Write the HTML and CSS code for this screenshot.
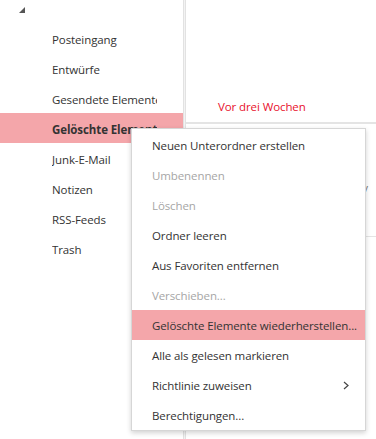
FILE: index.html
```html
<!DOCTYPE html>
<html lang="de">
<head>
<meta charset="utf-8">
<title>Ordner</title>
<link rel="stylesheet" href="styles.css">
</head>
<body>
<div class="app">
  <nav class="folders">
    <div class="tree-head">
      <svg class="caret" width="6" height="6" viewBox="0 0 6 6"><polygon points="6,0 6,6 0,6" fill="#555"/></svg>
    </div>
    <ul class="folder-list">
      <li class="folder"><span class="folder-name">Posteingang</span></li>
      <li class="folder"><span class="folder-name">Entwürfe</span></li>
      <li class="folder"><span class="folder-name">Gesendete Elemente</span></li>
      <li class="folder selected"><span class="folder-name">Gelöschte Elemente</span></li>
      <li class="folder"><span class="folder-name">Junk-E-Mail</span></li>
      <li class="folder"><span class="folder-name">Notizen</span></li>
      <li class="folder"><span class="folder-name">RSS-Feeds</span></li>
      <li class="folder"><span class="folder-name">Trash</span></li>
    </ul>
  </nav>
  <div class="divider"></div>
  <main class="messages">
    <div class="group-head">Vor drei Wochen</div>
    <div class="message-row"><span class="row-tail">v</span></div>
  </main>

  <ul class="context-menu">
    <li class="menu-item">Neuen Unterordner erstellen</li>
    <li class="menu-item disabled">Umbenennen</li>
    <li class="menu-item disabled">Löschen</li>
    <li class="menu-item">Ordner leeren</li>
    <li class="menu-item">Aus Favoriten entfernen</li>
    <li class="menu-item disabled">Verschieben...</li>
    <li class="menu-item active">Gelöschte Elemente wiederherstellen...</li>
    <li class="menu-item">Alle als gelesen markieren</li>
    <li class="menu-item has-sub">Richtlinie zuweisen
      <svg class="chev" width="6" height="9" viewBox="0 0 6 9"><polyline points="1,1 5,4.5 1,8" fill="none" stroke="#444" stroke-width="1.2"/></svg>
    </li>
    <li class="menu-item">Berechtigungen...</li>
  </ul>
</div>
</body>
</html>
```

FILE: styles.css
```css
* { box-sizing: border-box; }
html, body {
  margin: 0;
  padding: 0;
  background: #ffffff;
}
body {
  font-family: "Open Sans", "Noto Sans", "DejaVu Sans", sans-serif;
  font-size: 11.5px;
  letter-spacing: -0.1px;
  color: #333333;
}
.app {
  position: relative;
  display: flex;
  width: 376px;
  height: 439px;
  overflow: hidden;
}
.folders {
  width: 183px;
  flex: none;
}
.tree-head {
  height: 23px;
  padding: 7px 0 0 19px;
}
.caret { display: block; }
.folder-list {
  list-style: none;
  margin: 0;
  padding: 0;
}
.folder {
  height: 30px;
  padding: 9px 0 0 52px;
  line-height: 16px;
  white-space: nowrap;
}
.folder-name {
  display: block;
  width: 105px;
  overflow: hidden;
}
.folder.selected {
  background: #f4a6aa;
  font-weight: 700;
}
.divider {
  width: 3px;
  flex: none;
  border-left: 1px solid #e2e2e2;
  border-right: 1px solid #e2e2e2;
  background: #f3f3f3;
}
.messages {
  flex: 1;
  display: flex;
  flex-direction: column;
}
.group-head {
  height: 124px;
  padding: 99px 0 0 32px;
  line-height: 16px;
  color: #e8112d;
  border-bottom: 2px solid #e4e4e4;
}
.message-row {
  height: 113px;
  border-bottom: 1px solid #e4e4e4;
  display: flex;
  justify-content: flex-end;
  padding: 58px 8px 0 0;
}
.row-tail {
  color: #777777;
  font-size: 11px;
  line-height: 12px;
}
.context-menu {
  position: absolute;
  left: 131px;
  top: 128px;
  width: 235px;
  margin: 0;
  padding: 1px 0 0;
  list-style: none;
  background: #ffffff;
  border: 1px solid #d6d6d6;
  box-shadow: 0 2px 5px rgba(0, 0, 0, 0.18);
}
.menu-item {
  height: 30px;
  padding: 1px 16px 0 20px;
  line-height: 16px;
  white-space: nowrap;
  display: flex;
  align-items: center;
  justify-content: space-between;
}
.menu-item.disabled { color: #a6a6a6; }
.menu-item.active { background: #f4a6aa; }
.chev { display: block; }
```
